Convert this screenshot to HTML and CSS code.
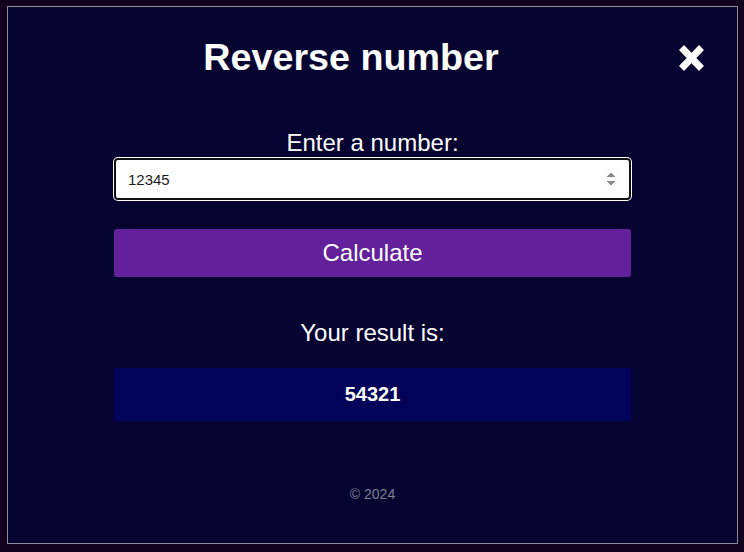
FILE: index.html
```html
<!DOCTYPE html>
<html lang="en">
<head>
<meta charset="utf-8">
<title>Reverse number</title>
<link rel="stylesheet" href="styles.css">
</head>
<body>
<div class="modal">
  <header class="modal-header">
    <h1 class="title">Reverse number</h1>
    <button class="close" type="button" aria-label="Close">
      <svg width="25" height="26" viewBox="0 0 25 26" aria-hidden="true">
        <path d="M2.5 2.5 L22.5 23.5 M22.5 2.5 L2.5 23.5" stroke="#fff" stroke-width="7" stroke-linecap="butt" fill="none"/>
      </svg>
    </button>
  </header>
  <main class="content">
    <label class="label" for="num">Enter a number:</label>
    <input class="num-input" id="num" type="number" value="12345" autofocus>
    <button class="calc" type="button">Calculate</button>
    <p class="result-label">Your result is:</p>
    <div class="result">54321</div>
    <footer class="footer">© 2024</footer>
  </main>
</div>
</body>
</html>
```

FILE: styles.css
```css
html, body {
  margin: 0;
  padding: 0;
}

body {
  background: #12001f;
  font-family: "Liberation Sans", Arial, sans-serif;
  color: #ffffff;
  padding: 6px 6px 8px 7px;
  box-sizing: border-box;
  height: 552px;
}

.modal {
  box-sizing: border-box;
  height: 538px;
  border: 1px solid #8c8a96;
  background: #060331;
  display: flex;
  flex-direction: column;
}

.modal-header {
  display: flex;
  align-items: center;
  padding: 29px 33px 0 20px;
  gap: 5px;
}

.title {
  flex: 1;
  margin: 0;
  text-align: center;
  font-size: 37.7px;
  line-height: 43px;
  font-weight: 700;
}

.close {
  width: 25px;
  height: 26px;
  padding: 0;
  border: 0;
  background: none;
  display: flex;
}

.content {
  width: 517px;
  margin: 0 auto;
  display: flex;
  flex-direction: column;
  align-items: stretch;
}

.label {
  margin-top: 50px;
  font-size: 24px;
  line-height: 28px;
  text-align: center;
}

.num-input {
  margin-top: 1px;
  box-sizing: border-box;
  height: 42px;
  width: 517px;
  border: 2px solid #101010;
  border-radius: 4px;
  box-shadow: 0 0 0 1px #ffffff;
  background: #ffffff;
  outline: none;
  padding: 0 10px 0 12px;
  font-family: "Liberation Sans", Arial, sans-serif;
  font-size: 15px;
  color: #1a1a1a;
  caret-color: #000;
}

.num-input:focus {
  outline: none;
}

.num-input::-webkit-inner-spin-button {
  opacity: 1;
}

.calc {
  margin-top: 29px;
  height: 48px;
  border: 0;
  border-radius: 3px;
  background: #62209a;
  color: #ffffff;
  font-family: "Liberation Sans", Arial, sans-serif;
  font-size: 24px;
  padding: 0;
}

.result-label {
  margin: 42px 0 0;
  font-size: 24px;
  line-height: 28px;
  text-align: center;
}

.result {
  margin-top: 21px;
  height: 53px;
  background: #02025b;
  display: flex;
  align-items: center;
  justify-content: center;
  font-size: 20px;
  font-weight: 700;
}

.footer {
  margin-top: 65px;
  font-size: 14px;
  line-height: 16px;
  text-align: center;
  color: #7f7e93;
}
```
